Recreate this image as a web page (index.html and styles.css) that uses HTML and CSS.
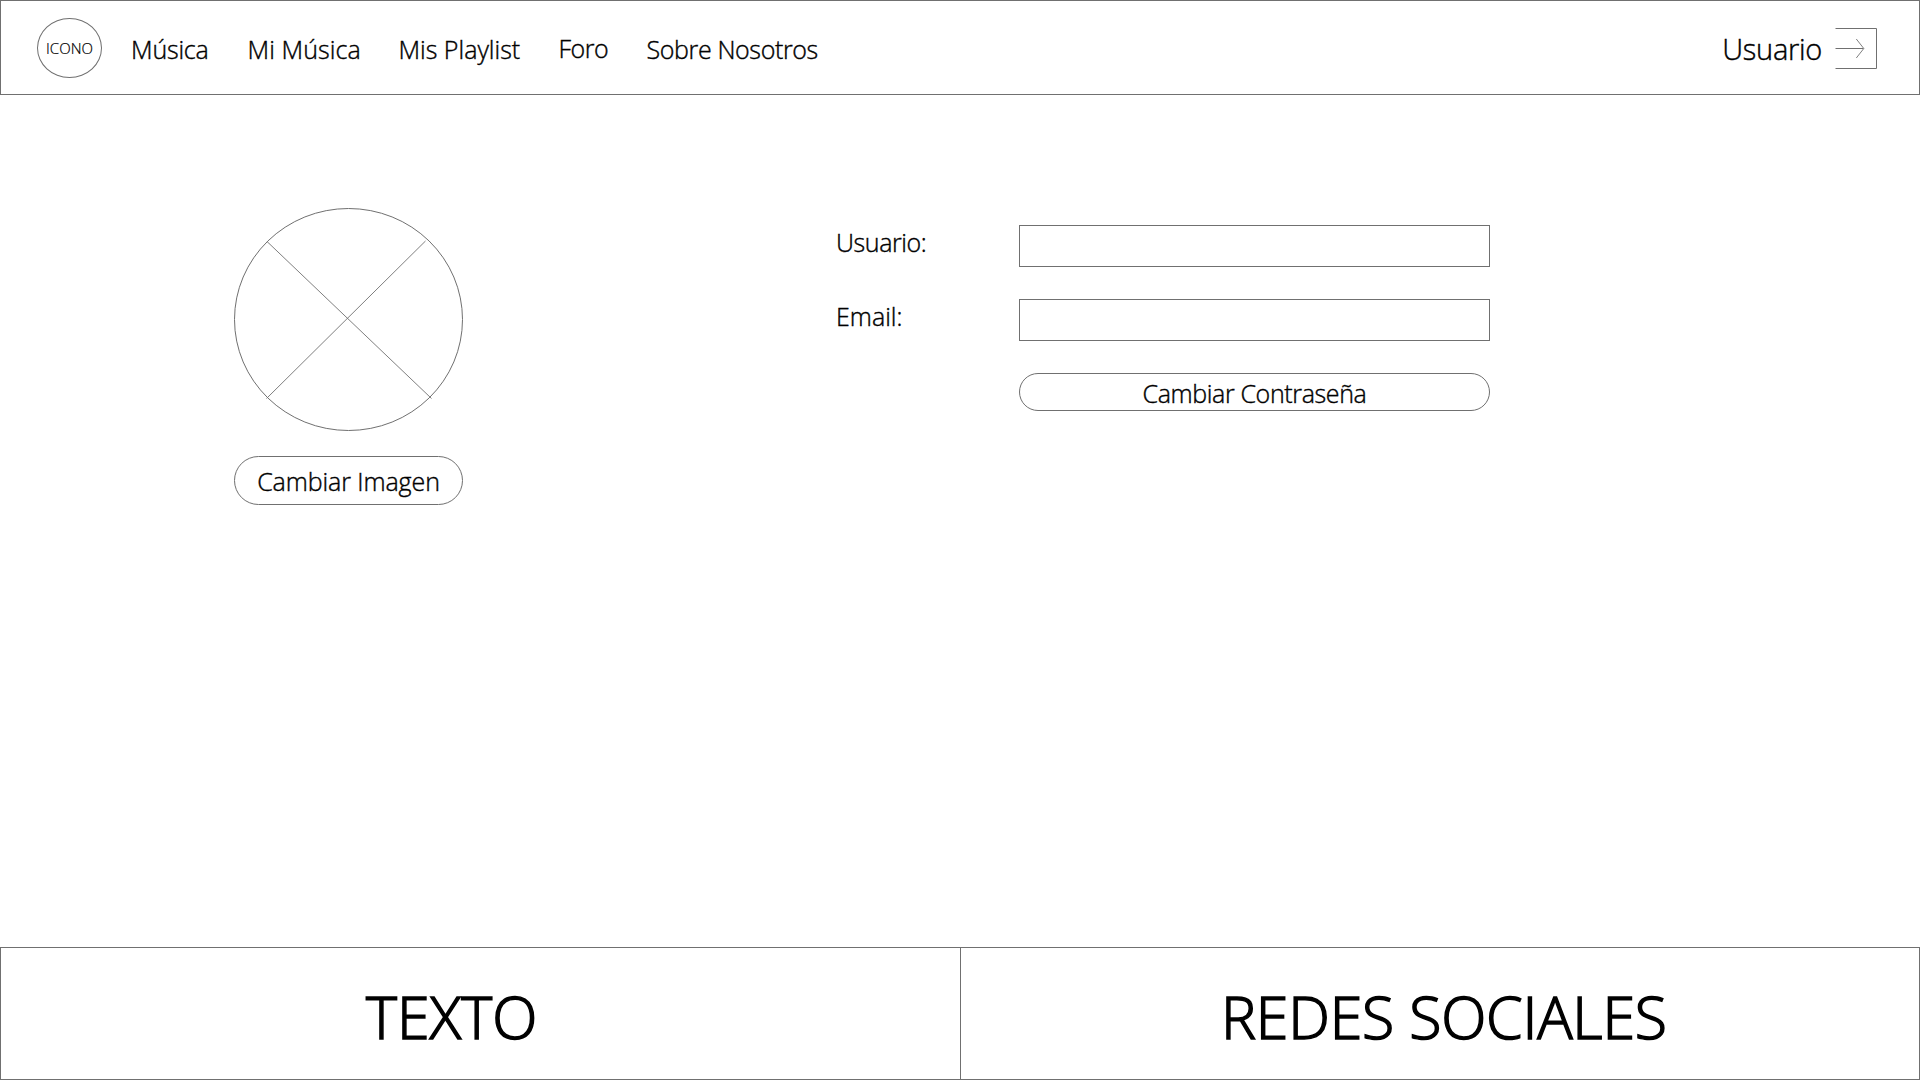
FILE: index.html
```
<!DOCTYPE html>
<html lang="es">
<head>
<meta charset="utf-8">
<title>Perfil de usuario</title>
<link rel="stylesheet" href="styles.css">
</head>
<body>
<header class="header">
  <div class="logo"><span>ICONO</span></div>
  <nav class="nav">
    <a class="t-musica">Música</a>
    <a class="t-mimusica">Mi Música</a>
    <a>Mis Playlist</a>
    <a class="t-foro">Foro</a>
    <a class="t-sobre">Sobre Nosotros</a>
  </nav>
  <div class="account">
    <span class="t-user">Usuario</span>
    <svg class="exit" width="44" height="44" viewBox="0 0 44 44"><path d="M1.5 1.5H42.5V41.5H1.5M1.5 21.5H29.5"/><path class="thin" d="M22.3 12L29.8 21.5L22.3 31"/></svg>
  </div>
</header>
<main class="main">
  <section class="profile">
    <svg class="avatar" width="229" height="223" viewBox="0 0 229 223"><ellipse cx="114.5" cy="111.5" rx="114" ry="111"/><path class="thin" d="M33 33.5L197.5 190.5M191.5 33L32.5 190.5"/></svg>
    <button class="pill image-button"><span class="t-imagen">Cambiar Imagen</span></button>
  </section>
  <form class="form">
    <label class="t-usuario" for="usuario">Usuario:</label>
    <input id="usuario" class="field">
    <label for="email">Email:</label>
    <input id="email" class="field">
    <button type="button" class="pill password-button"><span class="t-contra">Cambiar Contraseña</span></button>
  </form>
</main>
<footer class="footer">
  <div class="cell">TEXTO</div>
  <div class="cell social">REDES SOCIALES</div>
</footer>
</body>
</html>
```
FILE: styles.css
```
* { box-sizing: border-box; }
body {
  margin: 0;
  height: 1080px;
  display: flex;
  flex-direction: column;
  background: #fff;
  color: #000;
  font: 300 25px/34px "Open Sans", sans-serif;
  -webkit-text-stroke: .4px #000;
  overflow: hidden;
}
span, a, label { white-space: nowrap; }
svg { display: block; fill: none; stroke: #707070; stroke-width: 1; }
.thin { stroke-width: .9; }

.header {
  height: 95px;
  border: 1px solid #707070;
  display: flex;
  padding-left: 36px;
}
.logo {
  width: 65px;
  height: 60px;
  margin-top: 17px;
  border: 1px solid #707070;
  border-radius: 50%;
  display: flex;
  align-items: center;
  justify-content: center;
  font-size: 15px;
  -webkit-text-stroke-width: .2px;
}
.nav {
  display: grid;
  grid-template-columns: 116.5px 151px 160px 88px auto;
  margin: 31px 0 0 29px;
  height: 34px;
}
.t-musica { letter-spacing: -.2px; }
.t-mimusica { letter-spacing: .1px; }
.t-foro { margin-top: -1px; letter-spacing: -.48px; }
.t-sobre { letter-spacing: -.37px; }
.account { display: flex; margin: 26px 41px 0 auto; }
.t-user { font-size: 29px; line-height: 40px; margin-top: 2px; letter-spacing: -.28px; }
.exit { margin-left: 12px; }

.main { flex: 1; display: flex; padding-left: 234px; }
.profile { width: 229px; margin-top: 113px; }
.pill {
  display: flex;
  align-items: center;
  justify-content: center;
  width: 100%;
  padding: 0;
  background: none;
  border: 1px solid #707070;
  font: inherit;
  color: inherit;
  -webkit-text-stroke: inherit;
}
.image-button { height: 49px; margin-top: 25px; border-radius: 24.5px; padding-top: 1px; }
.t-imagen { letter-spacing: -.09px; }
.form {
  display: grid;
  grid-template-columns: 183px 471px;
  grid-template-rows: 42px 42px 38px;
  row-gap: 32px;
  align-content: start;
  margin: 130px 0 0 373px;
}
.t-usuario { letter-spacing: -.4px; }
.field { width: 471px; height: 42px; border: 1px solid #707070; padding: 0 10px; font: inherit; }
.password-button { grid-column: 2; height: 38px; border-radius: 19px; padding-top: 1px; }
.t-contra { letter-spacing: -.37px; }

.footer {
  height: 133px;
  display: grid;
  grid-template-columns: 960px 960px;
  border: 1px solid #707070;
  font-size: 59px;
  line-height: 80px;
  -webkit-text-stroke-width: 1.5px;
}
.cell { padding: 28px 0 0 365px; }
.social { border-left: 1px solid #707070; padding-left: 260px; margin-left: -1px; letter-spacing: -.2px; }
```
